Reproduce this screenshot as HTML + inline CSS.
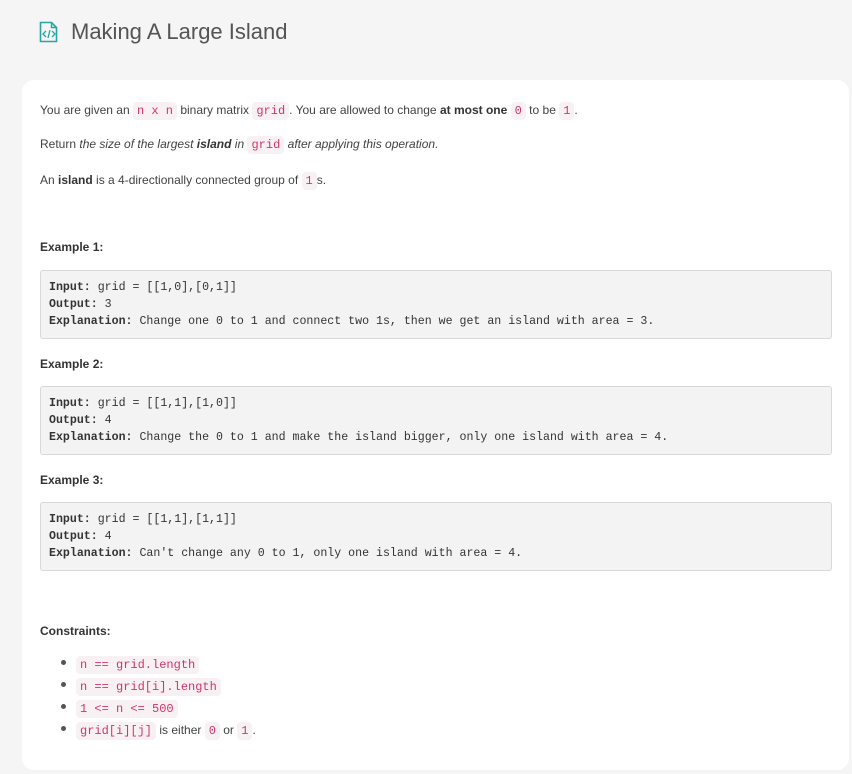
<!DOCTYPE html>
<html><head><meta charset="utf-8"><style>
body{margin:0;width:852px;height:774px;background:#f5f5f5;font-family:"Liberation Sans",sans-serif;color:#333;position:relative;overflow:hidden}
.t{position:absolute;left:71px;top:18px;font-size:22px;color:#545454;line-height:28px}
.card{position:absolute;left:22px;top:80px;width:827px;height:690px;background:#fff;border-radius:12px}
.l{position:absolute;left:40px;font-size:12px;line-height:16px;white-space:nowrap;color:#424242}
.h{font-weight:bold;color:#333}
code{font-family:"Liberation Mono",monospace;font-size:12px;color:#d6336c;background:#f7f1f3;border-radius:4px;padding:2px 4px}
.pre{position:absolute;left:40px;width:792px;background:#f3f3f3;border:1px solid #d8d8d8;border-radius:3px;font-family:"Liberation Mono",monospace;font-size:11.6px;line-height:17px;color:#333;padding:8px 0 0 8px;box-sizing:border-box;height:69px;white-space:pre}
.dot{position:absolute;left:61px;width:5px;height:5px;border-radius:50%;background:#555}
</style></head><body>
<svg style="position:absolute;left:39px;top:21px" width="20" height="22" viewBox="0 0 20 22"><path d="M1.5 1.5h11l5 5v14h-16z" fill="none" stroke="#2aa3a3" stroke-width="1.6"/><path d="M12.5 1.5v5h5" fill="none" stroke="#2aa3a3" stroke-width="1.4"/><path d="M7 10l-3 3 3 3M13 10l3 3-3 3M11 9l-2 8" fill="none" stroke="#2aa3a3" stroke-width="1.3"/></svg>
<div class="t">Making A Large Island</div>
<div class="card"></div>
<div class="l" style="top:102px">You are given an <code>n x n</code> binary matrix <code>grid</code>. You are allowed to change <b class="h">at most one</b> <code>0</code> to be <code>1</code>.</div>
<div class="l" style="top:136px">Return <i>the size of the largest <b class="h">island</b> in</i> <code>grid</code> <i>after applying this operation.</i></div>
<div class="l" style="top:172px">An <b class="h">island</b> is a 4-directionally connected group of <code>1</code>s.</div>
<div class="l h" style="top:239px">Example 1:</div>
<div class="pre" style="top:270px"><b>Input:</b> grid = [[1,0],[0,1]]
<b>Output:</b> 3
<b>Explanation:</b> Change one 0 to 1 and connect two 1s, then we get an island with area = 3.</div>
<div class="l h" style="top:356px">Example 2:</div>
<div class="pre" style="top:386px"><b>Input:</b> grid = [[1,1],[1,0]]
<b>Output:</b> 4
<b>Explanation:</b> Change the 0 to 1 and make the island bigger, only one island with area = 4.</div>
<div class="l h" style="top:472px">Example 3:</div>
<div class="pre" style="top:502px"><b>Input:</b> grid = [[1,1],[1,1]]
<b>Output:</b> 4
<b>Explanation:</b> Can't change any 0 to 1, only one island with area = 4.</div>
<div class="l h" style="top:623px">Constraints:</div>
<div class="dot" style="top:660px"></div><div class="l" style="left:76px;top:656px"><code>n == grid.length</code></div>
<div class="dot" style="top:682px"></div><div class="l" style="left:76px;top:678px"><code>n == grid[i].length</code></div>
<div class="dot" style="top:704px"></div><div class="l" style="left:76px;top:700px"><code>1 &lt;= n &lt;= 500</code></div>
<div class="dot" style="top:726px"></div><div class="l" style="left:76px;top:722px"><code>grid[i][j]</code> is either <code>0</code> or <code>1</code>.</div>
</body></html>
